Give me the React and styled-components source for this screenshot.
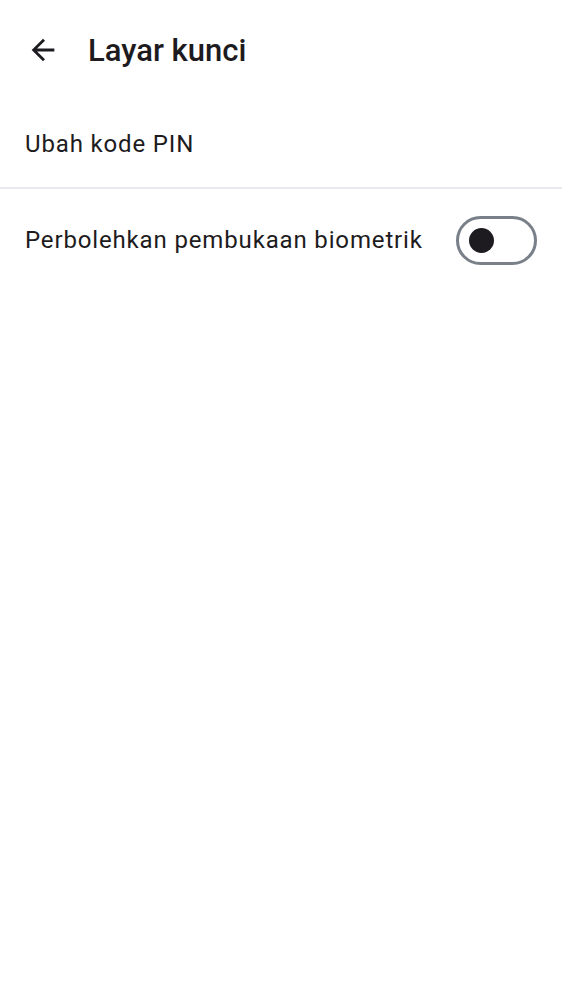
import React, { useState } from 'react';
import styled, { createGlobalStyle } from 'styled-components';

const GlobalStyle = createGlobalStyle`
  html, body {
    margin: 0;
    padding: 0;
    background: #ffffff;
  }
  body {
    font-family: Roboto, "Noto Sans", sans-serif;
    color: #1d1b20;
  }
`;

const Page = styled.div`
  width: 562px;
  min-height: 1000px;
  background: #ffffff;
`;

const TopBar = styled.header`
  display: flex;
  align-items: center;
  height: 100px;
  padding: 0 0 0 26px;
  box-sizing: border-box;
`;

const BackButton = styled.button`
  display: flex;
  align-items: center;
  justify-content: center;
  width: 34px;
  height: 34px;
  padding: 0;
  border: none;
  background: none;
  color: #1d1b20;
  cursor: pointer;
`;

const Title = styled.h1`
  margin: 0 0 0 28px;
  font-size: 31px;
  font-weight: 500;
  letter-spacing: 0;
  color: #1d1b20;
`;

const Row = styled.div`
  display: flex;
  align-items: center;
  justify-content: space-between;
  height: ${(p) => p.$height}px;
  padding: 0 25px;
  box-sizing: border-box;
  border-bottom: ${(p) => (p.$divider ? '2px solid #e8eaed' : 'none')};
`;

const Label = styled.span`
  font-size: 24px;
  font-weight: 400;
  color: #1d1b20;
  letter-spacing: 0.85px;
`;

const Track = styled.button`
  position: relative;
  width: 81px;
  height: 49px;
  padding: 0;
  border-radius: 25px;
  border: 3px solid #79808a;
  background: #ffffff;
  box-sizing: border-box;
  cursor: pointer;
`;

const Knob = styled.span`
  position: absolute;
  top: 50%;
  left: ${(p) => (p.$on ? '41px' : '10px')};
  width: 25px;
  height: 25px;
  margin-top: -12.5px;
  border-radius: 50%;
  background: #1d1b20;
`;

const ArrowBack = () => (
  <svg width="34" height="34" viewBox="0 0 24 24" fill="currentColor">
    <path d="M20 11H7.83l5.59-5.59L12 4l-8 8 8 8 1.41-1.41L7.83 13H20v-2z" />
  </svg>
);

const Toggle = ({ on, onToggle }) => (
  <Track type="button" role="switch" aria-checked={on} onClick={onToggle}>
    <Knob $on={on} />
  </Track>
);

export default function App() {
  const [biometric, setBiometric] = useState(false);
  return (
    <Page>
      <GlobalStyle />
      <TopBar>
        <BackButton aria-label="Kembali">
          <ArrowBack />
        </BackButton>
        <Title>Layar kunci</Title>
      </TopBar>
      <Row $height={89} $divider>
        <Label>Ubah kode PIN</Label>
      </Row>
      <Row $height={102}>
        <Label>Perbolehkan pembukaan biometrik</Label>
        <Toggle on={biometric} onToggle={() => setBiometric(!biometric)} />
      </Row>
    </Page>
  );
}
